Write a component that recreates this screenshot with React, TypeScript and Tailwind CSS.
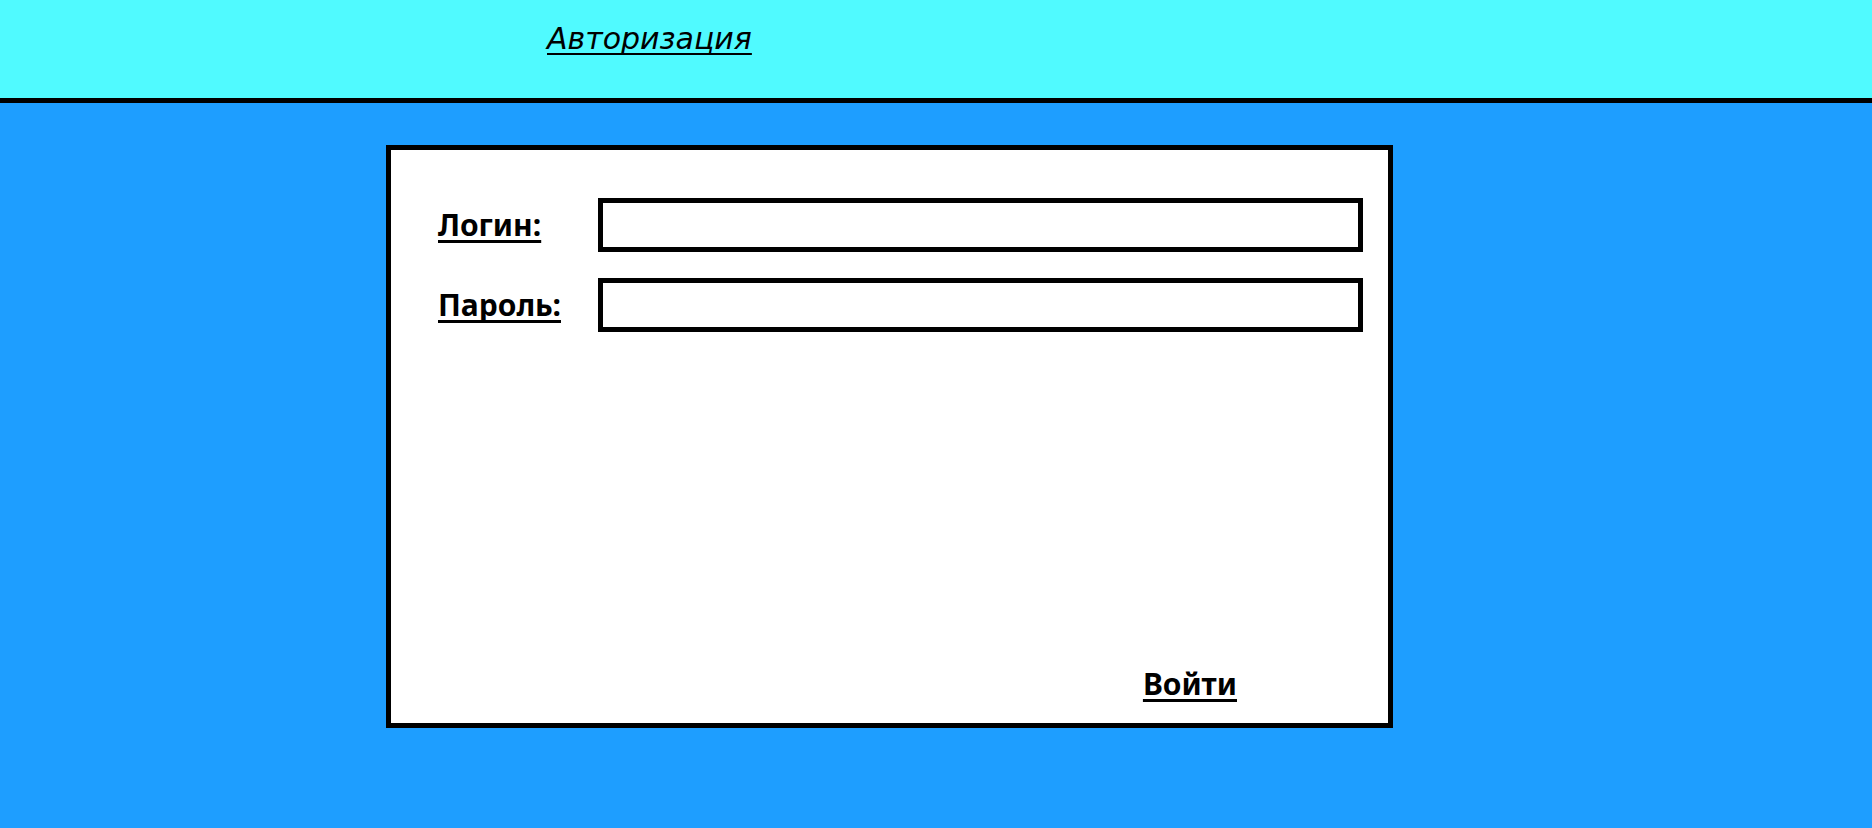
const labelCls =
  "w-[160px] shrink-0 text-[30px] font-bold text-black underline decoration-[3px] underline-offset-[4px] [text-decoration-skip-ink:none] leading-none";

const inputCls =
  "h-[54px] flex-1 border-[5px] border-black bg-white outline-none px-2 text-[22px]";

// Login form row
const Field = ({ label, type }: { label: string; type: string }) => (
  <div className="flex items-center">
    <label className={labelCls} style={{ fontFamily: '"Noto Sans", "Open Sans", sans-serif' }}>
      {label}
    </label>
    <input type={type} className={inputCls} />
  </div>
);

export default function App() {
  return (
    <div className="min-h-screen w-full bg-[#1e9eff] flex flex-col">
      {/* Header */}
      <header className="h-[103px] shrink-0 bg-[#50faff] border-b-[5px] border-black pl-[547px] pt-[24px]">
        <a
          href="#"
          className="text-[30px] italic text-black underline decoration-2 underline-offset-[4px] [text-decoration-skip-ink:none] leading-none"
          style={{ fontFamily: '"DejaVu Sans", Verdana, sans-serif' }}
        >
          Авторизация
        </a>
      </header>

      {/* Card */}
      <div className="ml-[386px] mt-[42px] w-[1007px] h-[583px] border-[5px] border-black bg-white flex flex-col pl-[47px] pr-[25px] pt-[48px] pb-[24px]">
        <div className="flex flex-col gap-[26px]">
          <Field label="Логин:" type="text" />
          <Field label="Пароль:" type="password" />
        </div>
        <div className="flex-1" />
        <div className="flex justify-end pr-[126px]">
          <button
            className="text-[30px] font-bold text-black underline decoration-[3px] underline-offset-[4px] [text-decoration-skip-ink:none] leading-none"
            style={{ fontFamily: '"Noto Sans", "Open Sans", sans-serif' }}
          >
            Войти
          </button>
        </div>
      </div>
    </div>
  );
}
